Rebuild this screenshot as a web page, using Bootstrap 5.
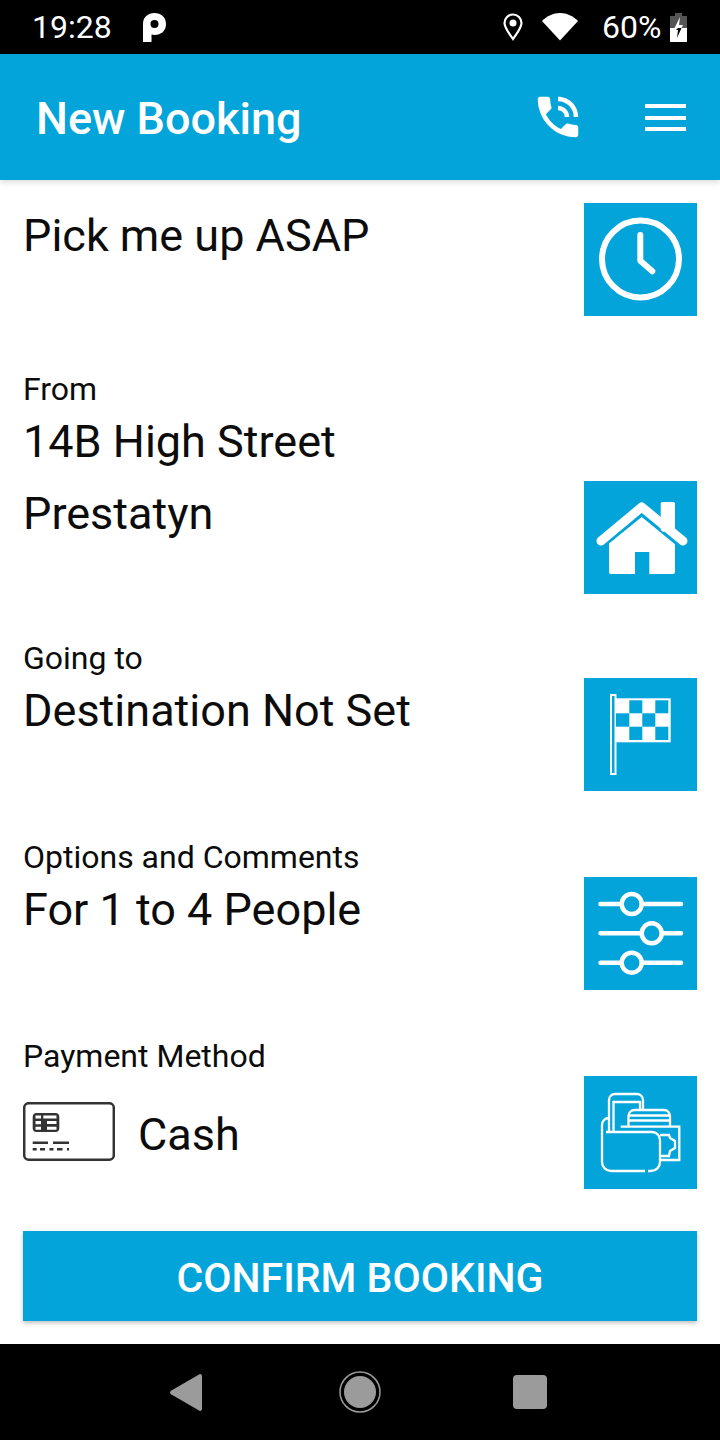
<!DOCTYPE html>
<html>
<head>
    <title>New Booking</title>
    <meta name="viewport" content="width=device-width, initial-scale=1.0">
    <link href="https://cdn.jsdelivr.net/npm/bootstrap@5.3.0/dist/css/bootstrap.min.css" rel="stylesheet">
    <style>
        :root {
            --brand-blue: #02a4da;
        }
        body {
            font-family: Roboto, "Liberation Sans", sans-serif;
            background-color: #fff;
            color: #0c0c0c;
        }
        .status-strip {
            height: 54px;
            background-color: #000;
            color: #fff;
            font-size: 32px;
            line-height: 54px;
            padding-left: 32px;
            padding-right: 33px;
        }
        .status-time { width: 111px; }
        .status-pct { margin-left: 24px; width: 68px; }
        .status-wifi { margin-left: 19px; }
        .app-bar {
            height: 126px;
            background-color: var(--brand-blue);
            color: #fff;
            padding-left: 36px;
            box-shadow: 0 2px 6px rgba(0,0,0,.15);
            position: relative;
        }
        .app-title {
            font-size: 45px;
            font-weight: 500;
            padding-top: 3px;
        }
        .app-actions { margin-right: 34px; gap: 60px; }
        .burger {
            width: 41px;
            height: 27px;
            border-top: 4px solid #fff;
            border-bottom: 4px solid #fff;
            position: relative;
        }
        .burger::after {
            content: "";
            position: absolute;
            left: 0;
            right: 0;
            top: 8px;
            height: 4px;
            background: #fff;
        }
        .booking-rows { padding: 0 23px 0 23px; }
        .booking-row { display: flex; justify-content: space-between; align-items: flex-end; height: 149px; }
        .row-pickup { margin-top: 23px; height: 113px; }
        .row-from { margin-top: 57px; height: 221px; }
        .row-to { margin-top: 48px; }
        .row-options, .row-payment { margin-top: 50px; }
        .row-text { align-self: flex-start; }
        .row-label { font-size: 32px; line-height: 33px; }
        .row-value { font-size: 45px; line-height: 72px; }
        .row-pickup .row-value { line-height: 65px; }
        .pay-line { margin-top: 29px; gap: 23px; }
        .cash-text { padding-top: 5px; }
        .tile {
            width: 113px;
            height: 113px;
            background-color: var(--brand-blue);
            flex-shrink: 0;
            display: block;
        }
        .confirm-btn {
            display: block;
            width: 674px;
            height: 90px;
            margin: 42px 0 0 23px;
            padding-top: 12px;
            background-color: var(--brand-blue);
            color: #fff;
            border: none;
            border-radius: 0;
            font-size: 41px;
            font-weight: 500;
            box-shadow: 0 2px 4px rgba(0,0,0,.25);
        }
        .confirm-btn:hover { background-color: var(--brand-blue); color: #fff; }
        .nav-strip {
            height: 96px;
            margin-top: 23px;
            background-color: #000;
            padding-left: 170px;
        }
        .nav-home { margin-left: 137px; }
        .nav-recent { margin-left: 132px; }
    </style>
</head>
<body>
    <div class="status-strip d-flex align-items-center">
        <span class="status-time">19:28</span>
        <svg width="23" height="29" viewBox="0 0 23 29"><path fill="#fff" fill-rule="evenodd" d="M0 29V11C0 4 5 0 11.500 0S23 4 23 11s-5 11-11.500 11c-1 0-2-.2-3-.5V29zM11.500 7a4 4 0 1 0 0 8 4 4 0 0 0 0-8z"/></svg>
        <svg class="ms-auto" width="20" height="28" viewBox="0 0 20 28"><path fill="none" stroke="#fff" stroke-width="2.200" d="M10 26C6 20 1.500 15 1.500 10a8.500 8.500 0 0 1 17 0C18.500 15 14 20 10 26z"/><circle cx="10" cy="10" r="3.500" fill="#fff"/></svg>
        <svg class="status-wifi" width="36" height="28" viewBox="0 0 36 28"><path fill="#fff" d="M0 8C5 3 11 0 18 0s13 3 18 8L18 27.500z"/></svg>
        <span class="status-pct">60%</span>
        <svg width="17" height="29" viewBox="0 0 17 29"><path fill="#555" d="M5 0h7v3h5v26H0V3h5z"/><path fill="#fff" d="M0 15h17v14H0z"/><path fill="#fff" d="M10 4L4 16h4l-2 10 7-14H9z"/><path fill="#000" d="M8 15h3.500L7 25l1-8H6z"/></svg>
    </div>

    <div class="app-bar d-flex align-items-center justify-content-between">
        <span class="app-title">New Booking</span>
        <div class="app-actions d-flex align-items-center">
            <svg width="54" height="54" viewBox="0 0 24 24"><path fill="#fff" d="M20 15.500c-1.250 0-2.450-.2-3.570-.57-.35-.11-.74-.03-1.020.24l-2.200 2.200c-2.830-1.440-5.150-3.750-6.590-6.590l2.200-2.210c.28-.26.36-.65.25-1C8.700 6.450 8.500 5.250 8.500 4c0-.55-.45-1-1-1H4c-.55 0-1 .45-1 1 0 9.390 7.610 17 17 17 .55 0 1-.45 1-1v-3.500c0-.55-.45-1-1-1zM19 12h2c0-4.970-4.030-9-9-9v2c3.870 0 7 3.130 7 7zm-4 0h2c0-2.760-2.240-5-5-5v2c1.660 0 3 1.340 3 3z"/></svg>
            <div class="burger"></div>
        </div>
    </div>

    <div class="booking-rows">
        <div class="booking-row row-pickup">
            <div class="row-text">
                <div class="row-value">Pick me up ASAP</div>
            </div>
            <svg class="tile" viewBox="0 0 113 113" fill="none" stroke="#fff" stroke-width="6" stroke-linecap="round" stroke-linejoin="round">
                <circle cx="56.500" cy="56" r="38.500"/>
                <path d="M56.300 32V57.700L68.300 68.300"/>
            </svg>
        </div>

        <div class="booking-row row-from">
            <div class="row-text">
                <div class="row-label">From</div>
                <div class="row-value">14B High Street<br>Prestatyn</div>
            </div>
            <svg class="tile" viewBox="0 0 113 113" fill="#fff">
                <rect x="76.700" y="21" width="14.300" height="30" rx="1.500"/>
                <path d="M17 60L57.700 26L99 60" fill="none" stroke="#fff" stroke-width="9" stroke-linecap="round" stroke-linejoin="round"/>
                <path d="M57.700 35.700L91 62V91a2 2 0 0 1-2 2H65.300V71H51V93H27a2 2 0 0 1-2-2V62z"/>
                <path d="M21 64.500L57.700 34.500L94 64.500" fill="none" stroke="#02a4da" stroke-width="2"/>
            </svg>
        </div>

        <div class="booking-row row-to">
            <div class="row-text">
                <div class="row-label">Going to</div>
                <div class="row-value">Destination Not Set</div>
            </div>
            <svg class="tile" viewBox="0 0 113 113">
                <rect x="27" y="17" width="4.500" height="79" fill="none" stroke="#fff" stroke-width="2"/>
                <rect x="32" y="20.300" width="54.700" height="44" fill="#fff"/>
                <g fill="#02a4da">
                    <rect x="45.300" y="22.300" width="13" height="13"/>
                    <rect x="71.300" y="22.300" width="13" height="13"/>
                    <rect x="32" y="35.300" width="13.300" height="13.400"/>
                    <rect x="58.300" y="35.300" width="13" height="13.400"/>
                    <rect x="45.300" y="48.700" width="13" height="13.300"/>
                    <rect x="71.300" y="48.700" width="13" height="13.300"/>
                </g>
            </svg>
        </div>

        <div class="booking-row row-options">
            <div class="row-text">
                <div class="row-label">Options and Comments</div>
                <div class="row-value">For 1 to 4 People</div>
            </div>
            <svg class="tile" viewBox="0 0 113 113" fill="#02a4da" stroke="#fff" stroke-width="4.500" stroke-linecap="round">
                <path d="M16.500 27H97M16.500 56.300H97M16.500 85.700H97"/>
                <circle cx="47.700" cy="27" r="10"/>
                <circle cx="67.700" cy="56.300" r="10"/>
                <circle cx="47.700" cy="85.700" r="10"/>
            </svg>
        </div>

        <div class="booking-row row-payment">
            <div class="row-text">
                <div class="row-label">Payment Method</div>
                <div class="pay-line d-flex align-items-center">
                    <svg width="92" height="60" viewBox="0 0 92 60">
                        <rect x="1.200" y="1.200" width="89.600" height="56.600" rx="4.500" fill="#fff" stroke="#333" stroke-width="2.500"/>
                        <rect x="9.700" y="11" width="26.600" height="19" rx="4" fill="#333"/>
                        <path fill="#fff" d="M12.500 13.500h5.500v3h-5.500zM12.500 19h5.500v3.200h-5.500zM12.500 24.700h5.500v3h-5.500zM20.300 13.500h13.200v3H20.300zM24 19h9.500v3h-9.500zM24 24.700h9.500v3h-9.500z"/>
                        <path stroke="#333" stroke-width="2.400" d="M9.700 40.700H25M30 40.700H46"/>
                        <path stroke="#333" stroke-width="2.400" d="M9.700 47.300h4M17 47.300h5M26.500 47.300h4M34 47.300h5.500M44 47.300h2"/>
                    </svg>
                    <span class="row-value lh-1 cash-text">Cash</span>
                </div>
            </div>
            <svg class="tile" viewBox="0 0 113 113" fill="none" stroke="#fff" stroke-width="2.300">
                <path d="M25 55V24a6 6 0 0 1 6-6H53a6 6 0 0 1 6 6V34"/>
                <path d="M29.500 55V26H56V34"/>
                <path d="M44.500 50V40a6 6 0 0 1 6-6H80a6 6 0 0 1 6 6V50"/>
                <path d="M45 39.500H86M45 44.500H86"/>
                <path d="M36.700 50.700H95.300V84H76"/>
                <path d="M76 59H85L86 62L91 65V72L86 75L85 80H76"/>
                <path d="M25 42a7 7 0 0 0-7 7V86a9 9 0 0 0 9 9H61M64 95H67a9 9 0 0 0 9-9V64a8 8 0 0 0-8-8H22"/>
            </svg>
        </div>
    </div>

    <button type="button" class="btn confirm-btn">CONFIRM BOOKING</button>

    <div class="nav-strip d-flex align-items-center">
        <svg width="32" height="37" viewBox="0 0 32 37"><path fill="#9b9b9b" d="M1 20.200a2 2 0 0 1 0-3.400L29 .4A2 2 0 0 1 32 2V35a2 2 0 0 1-3 1.600z"/></svg>
        <svg class="nav-home" width="42" height="42" viewBox="0 0 42 42"><circle cx="21" cy="21" r="20" fill="none" stroke="#9b9b9b" stroke-width="1.500"/><circle cx="21" cy="21" r="16" fill="#9b9b9b"/></svg>
        <svg class="nav-recent" width="34" height="34" viewBox="0 0 34 34"><rect width="34" height="34" rx="4" fill="#9b9b9b"/></svg>
    </div>

    <script src="https://cdn.jsdelivr.net/npm/bootstrap@5.3.0/dist/js/bootstrap.bundle.min.js"></script>
</body>
</html>
